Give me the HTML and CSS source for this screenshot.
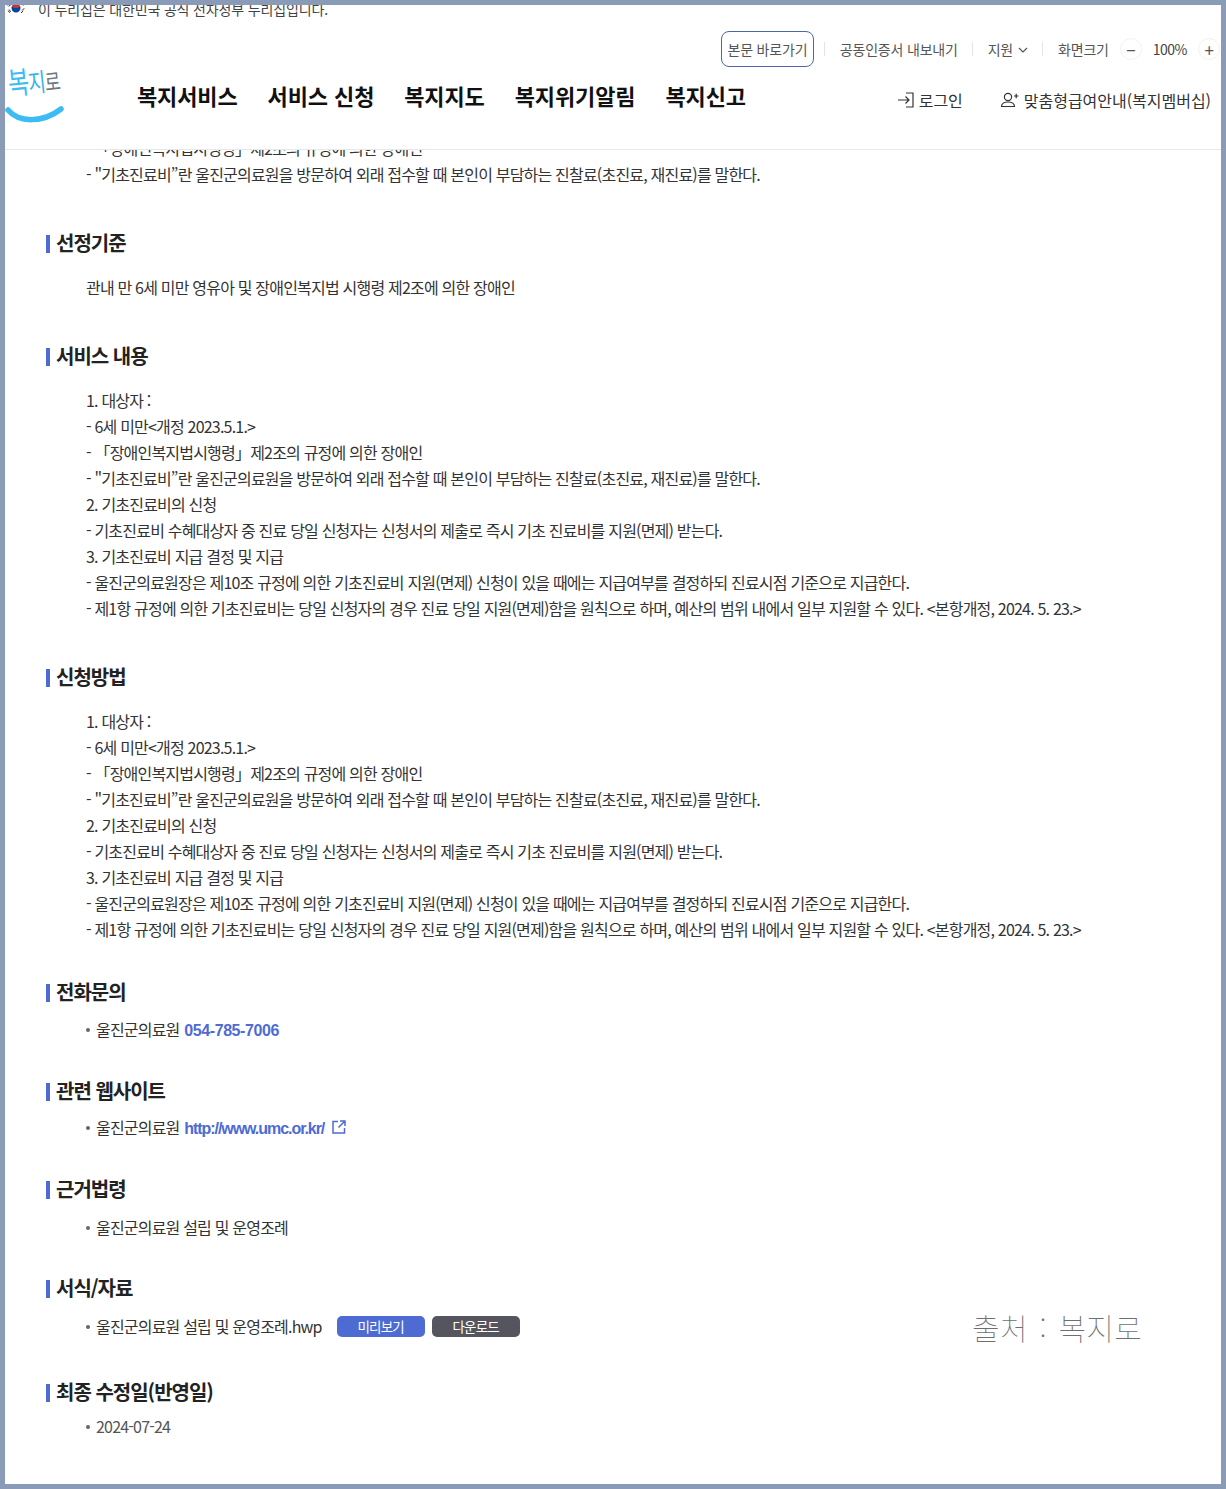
FILE: index.html
```html
<!DOCTYPE html>
<html lang="ko">
<head>
<meta charset="utf-8">
<title>복지로</title>
<link rel="stylesheet" href="styles.css">
</head>
<body>
<div class="frame">
  <header class="site-header">
    <div class="gov-banner">
      <svg class="flag" viewBox="0 0 18 14" width="18" height="14" aria-hidden="true">
        <path d="M4.500 7a4.500 4.500 0 0 1 9 0z" fill="#cd2e3a"/>
        <path d="M4.500 7a4.500 4.500 0 0 0 9 0c0-1.500-2.200-1.500-2.200 0H6.700c0-1.500-2.200-1.500-2.200 0z" fill="#0047a0"/>
        <path d="M.8 9.500l2.200 2.200M1.800 8.500l2.200 2.200M15 9.500l2.200-2.200M14 12l2.200-2.200M.8 4.500l2.200-2.200M1.800 5.500l2.200-2.200M14 2.300l2.200 2.200M15 1.300l2.200 2.200" stroke="#222" stroke-width="1"/>
      </svg>
      <span>이 누리집은 대한민국 공식 전자정부 누리집입니다.</span>
    </div>
    <div class="util-bar">
      <a class="skip-link">본문 바로가기</a>
      <span class="util-sep first-sep"></span>
      <span class="util-item">공동인증서 내보내기</span>
      <span class="util-sep"></span>
      <span class="util-item">지원
        <svg class="chev" viewBox="0 0 10 6" width="10" height="6" aria-hidden="true"><path d="M1 1l4 4 4-4" fill="none" stroke="#555" stroke-width="1.200"/></svg>
      </span>
      <span class="util-sep"></span>
      <span class="util-item">화면크기</span>
      <span class="zoom-btn">−</span>
      <span class="zoom-val">100%</span>
      <span class="zoom-btn">+</span>
    </div>
    <div class="main-bar">
      <div class="logo">
        <span class="logo-text"><span class="sky">복</span><span class="mix">지</span><span class="grey">로</span></span>
        <svg class="smile" viewBox="0 0 60 18" width="60" height="18" aria-hidden="true"><path d="M3 4c11 13 35 13 53-1" fill="none" stroke="#3cbcf2" stroke-width="5.500" stroke-linecap="round"/></svg>
      </div>
      <nav class="gnb">
        <a>복지서비스</a>
        <a>서비스 신청</a>
        <a>복지지도</a>
        <a>복지위기알림</a>
        <a>복지신고</a>
      </nav>
      <div class="member">
        <a class="member-link">
          <svg viewBox="0 0 18 18" width="18" height="18" aria-hidden="true"><path d="M1 9h11M8.500 5.500L12 9l-3.500 3.500M9 2h7v14H9" fill="none" stroke="#333" stroke-width="1.200"/></svg>
          로그인</a>
        <a class="member-link">
          <svg class="person" viewBox="0 0 19 18" width="19" height="18" aria-hidden="true"><circle cx="8" cy="6" r="3.600" fill="none" stroke="#333" stroke-width="1.200"/><path d="M1.500 15.500c0-6 13-6 13 0zM14 5h4.500M16.200 2.800v4.400" fill="none" stroke="#333" stroke-width="1.200"/></svg>
          맞춤형급여안내(복지멤버십)</a>
      </div>
    </div>
  </header>

  <main class="content">
    <div class="text-block first">
      <p>- 「장애인복지법시행령」제2조의 규정에 의한 장애인</p>
      <p>- "기초진료비”란 울진군의료원을 방문하여 외래 접수할 때 본인이 부담하는 진찰료(초진료, 재진료)를 말한다.</p>
    </div>

    <h2 class="sec-title s-main">선정기준</h2>
    <div class="text-block"><p>관내 만 6세 미만 영유아 및 장애인복지법 시행령 제2조에 의한 장애인</p></div>

    <h2 class="sec-title s-main">서비스 내용</h2>
    <div class="text-block">
      <p>1. 대상자 :</p>
      <p>- 6세 미만&lt;개정 2023.5.1.&gt;</p>
      <p>- 「장애인복지법시행령」제2조의 규정에 의한 장애인</p>
      <p>- "기초진료비”란 울진군의료원을 방문하여 외래 접수할 때 본인이 부담하는 진찰료(초진료, 재진료)를 말한다.</p>
      <p>2. 기초진료비의 신청</p>
      <p>- 기초진료비 수혜대상자 중 진료 당일 신청자는 신청서의 제출로 즉시 기초 진료비를 지원(면제) 받는다.</p>
      <p>3. 기초진료비 지급 결정 및 지급</p>
      <p>- 울진군의료원장은 제10조 규정에 의한 기초진료비 지원(면제) 신청이 있을 때에는 지급여부를 결정하되 진료시점 기준으로 지급한다.</p>
      <p>- 제1항 규정에 의한 기초진료비는 당일 신청자의 경우 진료 당일 지원(면제)함을 원칙으로 하며, 예산의 범위 내에서 일부 지원할 수 있다. &lt;본항개정, 2024. 5. 23.&gt;</p>
    </div>

    <h2 class="sec-title s-main">신청방법</h2>
    <div class="text-block">
      <p>1. 대상자 :</p>
      <p>- 6세 미만&lt;개정 2023.5.1.&gt;</p>
      <p>- 「장애인복지법시행령」제2조의 규정에 의한 장애인</p>
      <p>- "기초진료비”란 울진군의료원을 방문하여 외래 접수할 때 본인이 부담하는 진찰료(초진료, 재진료)를 말한다.</p>
      <p>2. 기초진료비의 신청</p>
      <p>- 기초진료비 수혜대상자 중 진료 당일 신청자는 신청서의 제출로 즉시 기초 진료비를 지원(면제) 받는다.</p>
      <p>3. 기초진료비 지급 결정 및 지급</p>
      <p>- 울진군의료원장은 제10조 규정에 의한 기초진료비 지원(면제) 신청이 있을 때에는 지급여부를 결정하되 진료시점 기준으로 지급한다.</p>
      <p>- 제1항 규정에 의한 기초진료비는 당일 신청자의 경우 진료 당일 지원(면제)함을 원칙으로 하며, 예산의 범위 내에서 일부 지원할 수 있다. &lt;본항개정, 2024. 5. 23.&gt;</p>
    </div>

    <h2 class="sec-title s-phone">전화문의</h2>
    <ul class="bullets"><li>울진군의료원 <a class="strong-link">054-785-7006</a></li></ul>

    <h2 class="sec-title s-web">관련 웹사이트</h2>
    <ul class="bullets"><li>울진군의료원 <a class="strong-link url">http://www.umc.or.kr/</a>
      <svg class="ext" viewBox="0 0 14 14" width="14" height="14" aria-hidden="true"><path d="M6 1.500H1v11.500h11.500V8M8 1h5v5M13 1L6.500 7.500" fill="none" stroke="#4e6bd3" stroke-width="1.500"/></svg>
    </li></ul>

    <h2 class="sec-title s-law">근거법령</h2>
    <ul class="bullets"><li>울진군의료원 설립 및 운영조례</li></ul>

    <h2 class="sec-title s-form">서식/자료</h2>
    <ul class="bullets"><li class="file-row">울진군의료원 설립 및 운영조례.hwp
      <a class="btn btn-blue">미리보기</a><a class="btn btn-dark">다운로드</a>
    </li></ul>

    <h2 class="sec-title s-last">최종 수정일(반영일)</h2>
    <ul class="bullets date"><li>2024-07-24</li></ul>
  </main>

  <div class="watermark">출처 : 복지로</div>
</div>
</body>
</html>
```
FILE: styles.css
```css
* { box-sizing: border-box; }
html, body { margin: 0; padding: 0; height: 100%; }
body {
  background: #8a9bb8;
  font-family: "Noto Sans CJK KR", "Noto Sans", sans-serif;
  color: #333;
  overflow: hidden;
}
.frame {
  position: relative;
  width: 1226px;
  height: 1489px;
  border: 5px solid #8a9bb8;
  background: #fff;
  overflow: hidden;
}

/* header lies over the scrolled content */
.site-header {
  position: absolute;
  top: 0;
  left: 0;
  right: 0;
  height: 145px;
  background: #fff;
  border-bottom: 1px solid #e6e8ec;
  z-index: 2;
  overflow: hidden;
}
.gov-banner {
  display: flex;
  align-items: center;
  height: 12px;
  margin-top: -2px;
  padding-left: 2px;
  gap: 13px;
  font-size: 14px;
  color: #444;
  letter-spacing: -0.150px;
}
.flag { flex: none; margin-top: -2px; }
.util-bar {
  display: flex;
  align-items: center;
  justify-content: flex-end;
  height: 36px;
  margin-top: 16px;
  padding-right: 1px;
  font-size: 14px;
  color: #555;
  letter-spacing: -0.200px;
}
.skip-link {
  display: flex;
  align-items: center;
  height: 36px;
  padding: 0 5.500px;
  border: 1px solid #4c66a8;
  border-radius: 8px;
}
.util-item { display: flex; align-items: center; gap: 6px; }
.util-sep { width: 1px; height: 14px; background: #e2e4e8; margin: 0 15px 0 14px; }
.first-sep { margin-left: 10px; }
.chev { margin-top: 2px; margin-left: -1px; }
.zoom-btn {
  display: flex;
  align-items: center;
  justify-content: center;
  width: 22px;
  height: 22px;
  margin-left: 11px;
  border: 1px solid #f1f2f4;
  border-radius: 50%;
  font-size: 17px;
  color: #555;
}
.zoom-val { margin-left: 11px; font-size: 14px; color: #444; letter-spacing: -0.500px; }
.main-bar {
  position: relative;
  display: flex;
  align-items: center;
  height: 40px;
  margin-top: 8px;
}
.logo { position: relative; width: 132px; height: 60px; flex: none; }
.logo-text {
  position: absolute;
  left: 3px;
  top: 2px;
  display: block;
  white-space: nowrap;
  transform: rotate(-6deg) scaleY(1.350);
  transform-origin: left center;
  font-weight: 400;
  letter-spacing: -1px;
  line-height: 30px;
}
.sky { color: #3cbcf2; font-size: 23px; }
.mix { color: #35b4ea; font-size: 19px; }
.grey { color: #6f7780; font-size: 17px; }
.smile { position: absolute; left: 0; top: 41px; }
.gnb { display: flex; gap: 30px; font-size: 22px; font-weight: 700; color: #111; letter-spacing: -0.120px; }
.member { display: flex; gap: 37px; margin-left: auto; margin-top: 9px; padding-right: 10px; font-size: 16px; color: #333; }
.member-link { display: flex; align-items: center; gap: 4px; letter-spacing: -0.020px; }
.person { margin-right: 1px; }

/* content */
.content { padding: 130px 0 0 41px; }
.text-block { padding-left: 40px; font-size: 16px; line-height: 26px; letter-spacing: -0.800px; color: #333; }
.text-block p { margin: 0; }
.sec-title {
  margin: 0;
  padding-left: 10px;
  position: relative;
  font-size: 20px;
  font-weight: 700;
  line-height: 30px;
  color: #222;
  letter-spacing: -1px;
}
.sec-title::before {
  content: "";
  position: absolute;
  left: 0;
  top: 7px;
  width: 4px;
  height: 18px;
  background: #4e6bd3;
}
.s-main { margin-top: 41px; margin-bottom: 16px; }
.s-phone { margin-top: 35px; margin-bottom: 9px; }
.s-web { margin-top: 32px; margin-bottom: 8px; }
.s-law { margin-top: 32px; margin-bottom: 10px; }
.s-form { margin-top: 33px; margin-bottom: 10px; }
.s-last { margin-top: 38px; margin-bottom: 6px; }

.bullets { list-style: none; margin: 0; padding: 0 0 0 40px; font-size: 16px; line-height: 26px; letter-spacing: -0.800px; color: #333; }
.bullets li { position: relative; padding-left: 10px; }
.bullets li::before {
  content: "";
  position: absolute;
  left: 0;
  top: 12px;
  width: 4px;
  height: 4px;
  border-radius: 50%;
  background: #666;
}
.date { color: #555; }
.strong-link { margin-left: 1px; color: #4e6bd3; font-weight: 700; font-family: "Liberation Sans", sans-serif; letter-spacing: -0.400px; }
.url { letter-spacing: -1.050px; }
.ext { margin-left: 4px; vertical-align: 0; }
.file-row { display: flex; align-items: center; }
.btn {
  display: flex;
  align-items: center;
  justify-content: center;
  width: 88px;
  height: 21px;
  border-radius: 5px;
  font-size: 13.500px;
  color: #fff;
}
.btn-blue { background: #4e6bd3; margin-left: 15px; }
.btn-dark { background: #55555f; margin-left: 7px; }

.watermark {
  position: absolute;
  left: 967px;
  top: 1299px;
  font-family: "Noto Sans CJK KR", sans-serif;
  font-size: 30px;
  font-weight: 100;
  line-height: 46px;
  color: #6f6f6f;
  letter-spacing: 0.300px;
  word-spacing: 3px;
  white-space: nowrap;
  z-index: 3;
}
```
